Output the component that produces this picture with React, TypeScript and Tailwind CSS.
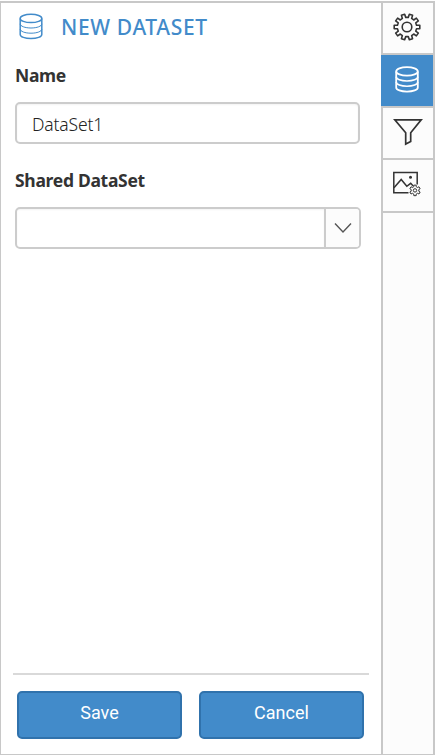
import React from 'react';

function gearPath(cx: number, cy: number, outer: number, inner: number, teeth: number, offset: number) {
  const step = (Math.PI * 2) / teeth;
  const pts: string[] = [];
  for (let i = 0; i < teeth; i++) {
    const a = offset + i * step;
    [
      [inner, -0.29],
      [outer, -0.21],
      [outer, 0.21],
      [inner, 0.29],
    ].forEach(([r, k]) => {
      pts.push(`${(cx + r * Math.cos(a + k * step)).toFixed(2)} ${(cy + r * Math.sin(a + k * step)).toFixed(2)}`);
    });
  }
  return `M${pts.join('L')}Z`;
}

function DatabaseIcon({ bold = false }: { bold?: boolean }) {
  return (
    <svg width="26" height="28" viewBox="0 0 26 28" fill="none" stroke="currentColor" strokeWidth={bold ? 1.8 : 1.5}>
      <ellipse cx="13" cy="5.4" rx="10.8" ry="4.2" />
      <path d="M2.2 5.4v16c0 2.4 4.8 4.2 10.8 4.2s10.8-1.8 10.8-4.2v-16" />
      <path
        strokeWidth={bold ? 1.6 : 1}
        d="M2.2 10.8c0 2.4 4.8 4.2 10.8 4.2s10.8-1.8 10.8-4.2M2.2 16c0 2.4 4.8 4.2 10.8 4.2s10.8-1.8 10.8-4.2"
      />
    </svg>
  );
}

function SettingsIcon() {
  return (
    <svg width="30" height="30" viewBox="0 0 30 30" fill="none" stroke="#333" strokeWidth="1.6" strokeLinejoin="round">
      <path d={gearPath(15, 15, 12.9, 9.7, 10, -Math.PI / 2 + Math.PI / 10)} />
      <circle cx="15" cy="15" r="4.8" />
    </svg>
  );
}

function FilterIcon() {
  return (
    <svg width="30" height="30" viewBox="0 0 30 30" fill="none" stroke="#333" strokeWidth="1.7">
      <path d="M1.8 2.8H28.2L17.7 15.8V24.5L12.7 27V15.8Z" />
    </svg>
  );
}

function ImageSettingsIcon() {
  return (
    <svg width="30" height="30" viewBox="0 0 30 30" fill="none" stroke="#333" strokeWidth="1.5">
      <path d="M16.5 23.8H1.8V3.5H25.2V15.5" />
      <path d="M2 18.8L9.2 10.5L14.8 17.3L18.7 14.3L21.2 17" />
      <circle cx="18.5" cy="8.2" r="1.5" fill="#333" stroke="none" />
      <path strokeWidth="1" strokeLinejoin="round" d={gearPath(23, 21.4, 5.4, 3.9, 6, -Math.PI / 2)} />
      <circle cx="23" cy="21.4" r="1.7" strokeWidth="1" />
    </svg>
  );
}

export default function App() {
  const label = 'text-[17.5px] leading-6 font-bold tracking-[-0.3px] text-[#333]';
  const button =
    "h-12 w-[165px] rounded-[5px] border-2 border-[#3072ac] bg-[#428bca] pb-1.5 text-[18px] text-white font-['Roboto',sans-serif]";
  return (
    <div className="h-[755px] w-[435px] bg-white pt-px font-['Noto_Sans','Open_Sans',sans-serif]">
      <div className="flex h-[754px] border-t-2 border-r-2 border-b border-l border-[#c8c8c8]">
        <main className="flex w-[380px] flex-col">
          <header className="flex h-12 items-center pl-[17px] text-[#428bca]">
            <DatabaseIcon />
            <h1 className="ml-[17px] text-[21px] leading-none font-medium tracking-[0.65px]">NEW DATASET</h1>
          </header>
          <form className="flex flex-1 flex-col pl-[14px]">
            <label htmlFor="name" className={`${label} mt-3`}>Name</label>
            <input
              id="name"
              defaultValue="DataSet1"
              className="mt-[15px] h-[42px] w-[345px] rounded-[5px] border-2 border-[#ccc] px-[15px] pt-px text-[17.5px] font-light tracking-[-0.15px] text-[#222] shadow-[inset_0_1px_2px_#0000000d]"
            />
            <label htmlFor="shared" className={`${label} mt-6`}>Shared DataSet</label>
            <div className="mt-[15px] flex h-[42px] w-[346px] overflow-hidden rounded-[5px] border-2 border-[#ccc]">
              <input id="shared" className="min-w-0 flex-1 px-3 shadow-[inset_0_1px_2px_#0000000d]" />
              <button type="button" className="flex w-[35px] items-center justify-center border-l-2 border-[#ccc] bg-[#fcfcfc]">
                <svg width="18" height="12" viewBox="0 0 18 12" fill="none" stroke="#555" strokeWidth="1.4">
                  <path d="M1 1.5L9 9.9L17 1.5" />
                </svg>
              </button>
            </div>
          </form>
          <footer className="ml-3 flex h-[81px] w-[356px] gap-[17px] border-t-2 border-[#d9d9d9] pt-4 pl-1">
            <button className={button}>Save</button>
            <button className={button}>Cancel</button>
          </footer>
        </main>
        <nav className="flex w-[52px] flex-col border-l-2 border-[#c8c8c8] bg-[#fcfcfc]">
          <div className="flex h-[52px] items-center justify-center border-b-2 border-[#c8c8c8] pr-0.5 pb-0.5">
            <SettingsIcon />
          </div>
          <div className="-ml-0.5 flex h-[53px] items-center justify-center border-b-2 border-[#c8c8c8] bg-[#428bca] pb-0.5 text-white">
            <DatabaseIcon bold />
          </div>
          <div className="flex h-[52px] items-center justify-center border-b-2 border-[#c8c8c8] pb-0.5">
            <FilterIcon />
          </div>
          <div className="flex h-[53px] items-center justify-center border-b-2 border-[#c8c8c8] pr-0.5 pb-1">
            <ImageSettingsIcon />
          </div>
        </nav>
      </div>
    </div>
  );
}
